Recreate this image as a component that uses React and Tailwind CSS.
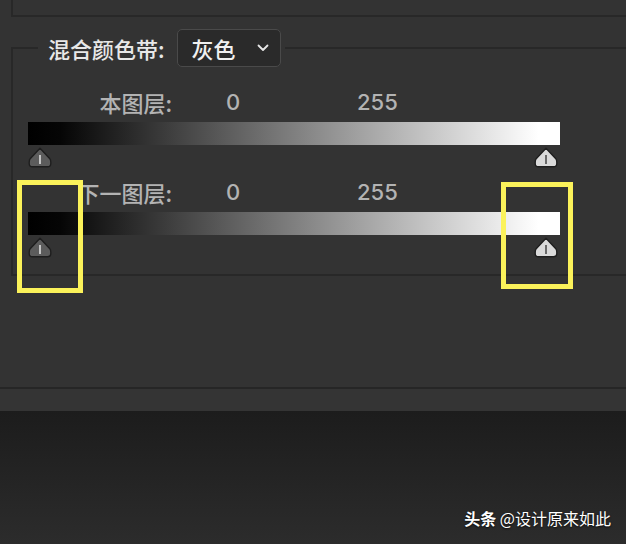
import React from "react";

const Thumb = ({ light }) => (
  <svg width="24" height="21" viewBox="0 0 24 21">
    <path
      d="M12 1.2 L21.6 11.4 Q22.8 12.8 22.8 15 L22.8 16.5 Q22.8 19.8 19.5 19.8 L4.5 19.8 Q1.2 19.8 1.2 16.5 L1.2 15 Q1.2 12.8 2.4 11.4 Z"
      fill={light ? "#dadada" : "#5c5c5c"}
      stroke="#1e1e1e"
      strokeWidth="1.4"
      strokeLinejoin="round"
    />
    <rect x="11" y="8" width="2" height="9" fill={light ? "#6a6a6a" : "#c4c4c4"} />
  </svg>
);

const GradientRow = ({ label }) => (
  <>
    <div className="flex items-center h-[26px] text-[22px] font-medium text-[#b3b3b3]">
      <span className="w-[159px] text-right leading-none">{label}</span>
      <span className="ml-[54px] w-[131px] font-['Inter',sans-serif] leading-none">0</span>
      <span className="font-['Inter',sans-serif] leading-none">255</span>
    </div>
    <div className="mt-[7px] ml-[15px] w-[532px] h-[23px] bg-[linear-gradient(to_right,#000_0%,#050505_6%,#ffffff_96%,#ffffff_100%)]" />
    <div className="mt-[2px] ml-[15px] w-[532px] pr-[2px] flex justify-between">
      <Thumb />
      <Thumb light />
    </div>
  </>
);

export default function App() {
  return (
    <div className="relative w-[626px] h-[544px] overflow-hidden bg-[#333333] flex flex-col font-['Noto_Sans_CJK_SC',sans-serif]">
      <div className="h-[17px] ml-[11px] shrink-0 border-l-2 border-b-2 border-[#282828]" />

      <fieldset className="mt-[12px] ml-[11px] w-[640px] shrink-0 border-2 border-[#282828] pb-[16px]">
        <legend className="ml-[25px] pl-[10px] pr-[4px]">
          <div className="h-[38px] flex items-center">
            <span className="text-[22px] font-medium text-[#e8e8e8] leading-none">混合颜色带:</span>
            <div className="ml-[12px] w-[104px] h-[38px] rounded-[5px] border-[1.5px] border-[#4a4a4a] bg-[#2a2a2a] flex items-center pl-[14px] pr-[11px]">
              <span className="text-[22px] font-medium text-[#f0f0f0] leading-none">灰色</span>
              <svg className="ml-auto" width="12" height="8" viewBox="0 0 12 8">
                <path d="M1.5 1.5 L6 6 L10.5 1.5" fill="none" stroke="#e6e6e6" strokeWidth="1.8" strokeLinecap="round" strokeLinejoin="round" />
              </svg>
            </div>
          </div>
        </legend>
        <div className="mt-[22px]">
          <GradientRow label="本图层:" />
        </div>
        <div className="mt-[11px]">
          <GradientRow label="下一图层:" />
        </div>
      </fieldset>

      <div className="mt-[111px] h-[24px] shrink-0 border-t-2 border-[#262626] bg-[#343434]" />

      <div className="flex-1 bg-[linear-gradient(to_bottom,#1c1c1c,#2c2c2c)] flex items-end justify-end pr-[15px] pb-[14px]">
        <span className="text-[16px] text-white [text-shadow:0_1px_2px_rgba(0,0,0,0.8)]">
          <span className="font-bold">头条</span> @设计原来如此
        </span>
      </div>

      <div className="absolute left-[17px] top-[180px] w-[66px] h-[113px] border-[5px] border-[#fbf25a]" />
      <div className="absolute left-[501px] top-[182px] w-[72px] h-[107px] border-[5px] border-[#fbf25a]" />
    </div>
  );
}
